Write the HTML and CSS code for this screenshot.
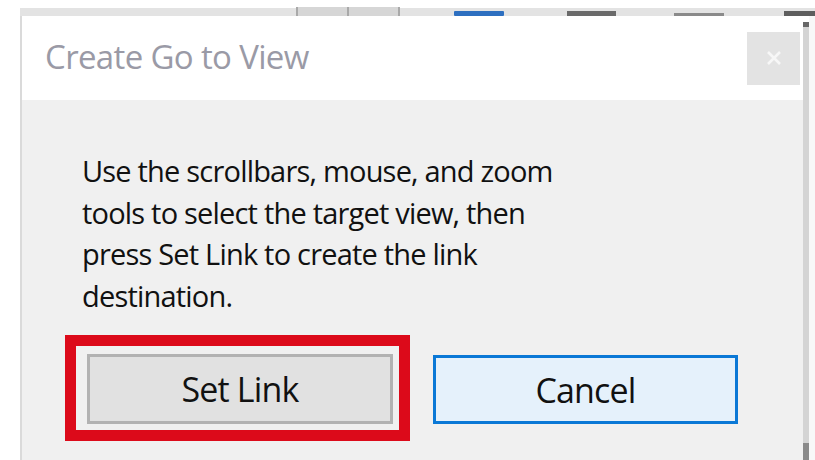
FILE: index.html
```html
<!DOCTYPE html>
<html lang="en">
<head>
<meta charset="utf-8">
<title>Create Go to View</title>
<link rel="stylesheet" href="styles.css">
</head>
<body>
<div class="screen">
  <div class="toolbar">
    <span class="tb-gap tb-gap-a"></span>
    <span class="tb-group">
      <span class="tb-sep"></span>
      <span class="tb-cell"></span>
      <span class="tb-sep"></span>
      <span class="tb-cell"></span>
      <span class="tb-sep"></span>
    </span>
    <span class="tb-bar tb-blue"></span>
    <span class="tb-bar tb-dark"></span>
    <span class="tb-bar tb-thin"></span>
    <span class="tb-bar tb-dark tb-last"></span>
  </div>
  <div class="workspace">
    <div class="dialog">
      <div class="titlebar">
        <span class="title">Create Go to View</span>
        <button class="close" type="button" aria-label="Close">
          <svg width="14" height="14" viewBox="0 0 14 14"><path d="M1 1 L13 13 M13 1 L1 13" stroke="#f7f7f7" stroke-width="2.6" fill="none"/></svg>
        </button>
      </div>
      <div class="content">
        <p class="message">Use the scrollbars, mouse, and zoom<br>tools to select the target view, then<br>press Set Link to create the link<br>destination.</p>
        <div class="actions">
          <div class="highlight">
            <button class="btn btn-set" type="button">Set Link</button>
          </div>
          <button class="btn btn-cancel" type="button">Cancel</button>
        </div>
      </div>
    </div>
    <div class="scroll">
      <span class="scroll-arrow"></span>
      <span class="scroll-track"></span>
      <span class="scroll-thumb"></span>
    </div>
    <div class="margin-right"></div>
  </div>
</div>
</body>
</html>
```

FILE: styles.css
```css
* { box-sizing: border-box; }

html, body {
  margin: 0;
  padding: 0;
  background: #ffffff;
}

.screen {
  width: 815px;
  height: 460px;
  display: flex;
  flex-direction: column;
  overflow: hidden;
  font-family: "Open Sans", "Noto Sans", sans-serif;
}

/* toolbar strip peeking above the dialog */
.toolbar {
  margin: 8px 0 0 20px;
  height: 8px;
  background: #e3e3e3;
  display: flex;
  align-items: flex-end;
}
.tb-gap-a { width: 276px; }
.tb-group {
  display: flex;
  height: 9px;
  align-self: flex-start;
  margin-top: -1px;
  background: #d6d6d6;
}
.tb-sep { width: 2px; background: #a9a9a9; }
.tb-cell { width: 49px; }
.tb-bar { height: 5px; }
.tb-blue { width: 50px; margin-left: 54px; background: #2d6fc0; border-radius: 1px; }
.tb-dark { width: 49px; margin-left: 63px; background: #6a6a6a; }
.tb-thin { width: 50px; margin-left: 58px; height: 3px; background: #8a8a8a; }
.tb-last { flex: 1; margin-left: 60px; background: #5e5e5e; }

.workspace {
  flex: 1;
  display: flex;
  margin-left: 20px;
}

.dialog {
  flex: 1;
  display: flex;
  flex-direction: column;
  border-left: 2px solid #dadada;
}

.titlebar {
  height: 84px;
  background: #ffffff;
  display: flex;
  align-items: center;
  justify-content: space-between;
  padding: 0 3px 0 23px;
}
.title {
  font-size: 33px;
  letter-spacing: -0.65px;
  color: #9a9aa6;
  margin-top: -3px;
}
.close {
  width: 53px;
  height: 53px;
  border: 0;
  padding: 0;
  background: #e3e3e3;
  display: flex;
  align-items: center;
  justify-content: center;
}

.content {
  flex: 1;
  background: #f0f0f0;
  padding: 50px 0 0 60px;
}
.message {
  margin: 0;
  font-size: 29px;
  letter-spacing: -0.8px;
  line-height: 41.5px;
  color: #111111;
}

.actions {
  display: flex;
  align-items: flex-start;
  margin: 19px 0 0 -17px;
}
.highlight {
  border: 11px solid #dc0a1a;
  padding: 8px 6px 6px 11px;
}
.btn {
  width: 306px;
  height: 70px;
  font-family: inherit;
  font-size: 34px;
  letter-spacing: -0.85px;
  color: #111111;
  padding: 0;
}
.btn-set {
  background: #e1e1e1;
  border: 3px solid #b2b2b2;
}
.btn-cancel {
  width: 305px;
  height: 69px;
  margin: 20px 0 0 23px;
  background: #e5f1fb;
  border: 3px solid #0a78d6;
}

/* page scrollbar at the right edge */
.scroll {
  width: 6px;
  display: flex;
  flex-direction: column;
}
.scroll-arrow { height: 11px; background: #ffffff; border-bottom: 5px solid #676767; }
.scroll-track { flex: 1; background: #d4d4d4; }
.scroll-thumb { height: 17px; background: #8a8a8a; }
.margin-right { width: 6px; background: #f8f8f8; }
```
